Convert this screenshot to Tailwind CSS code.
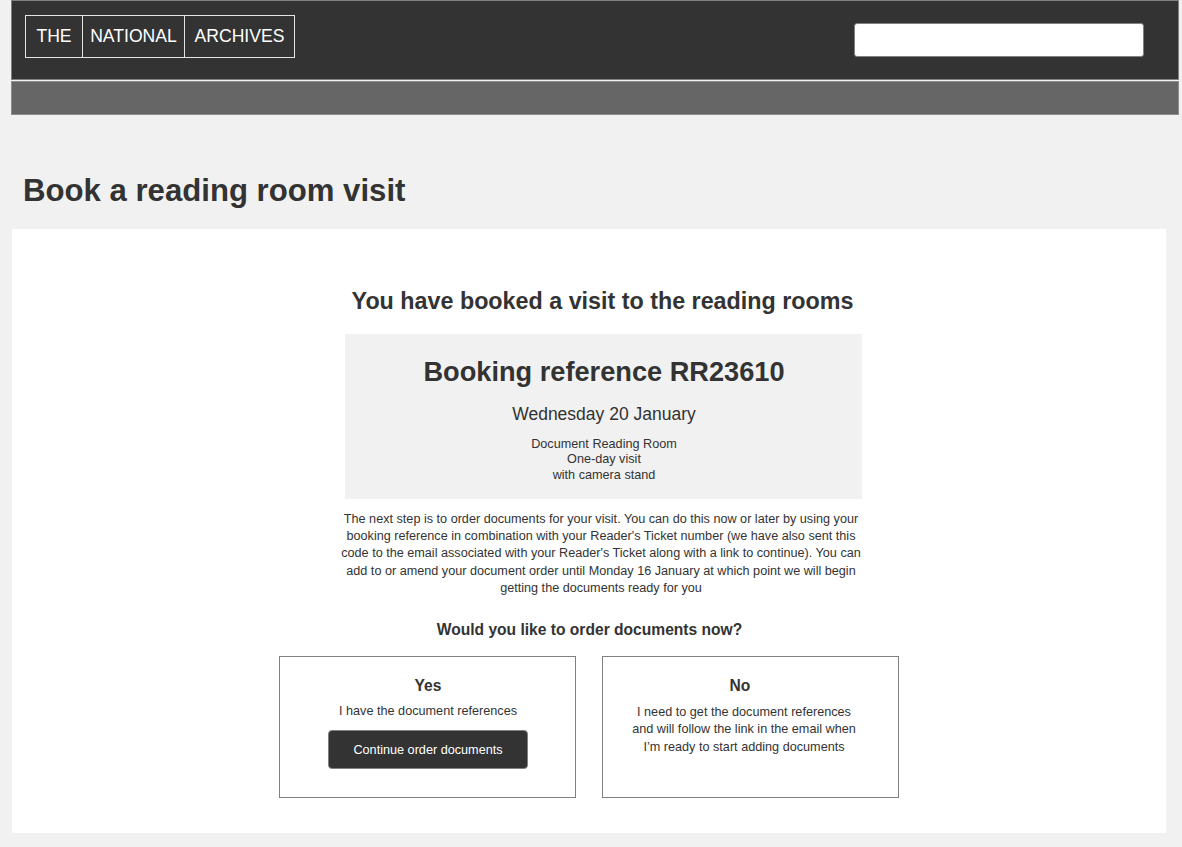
<!DOCTYPE html>
<html lang="en">
<head>
<meta charset="utf-8">
<title>Book a reading room visit</title>
<script src="https://cdn.jsdelivr.net/npm/@tailwindcss/browser@4"></script>
</head>
<body class="min-h-screen bg-[#f1f1f1] font-['Liberation_Sans',Arial,sans-serif] text-[#333]">
<div class="w-[1168px] ml-[11px]">
  <header class="flex h-20 items-start justify-between border border-[#808080] bg-[#333] pl-[13px] pr-[34px]">
    <div class="mt-[14px] flex h-[43px] w-[270px] divide-x-[1.5px] divide-[#e4e4e4] border-[1.5px] border-[#e4e4e4] text-[17.6px] leading-[41px] text-white">
      <span class="w-[57px] text-center">THE</span>
      <span class="w-[102px] text-center">NATIONAL</span>
      <span class="flex-1 text-center">ARCHIVES</span>
    </div>
    <input type="text" aria-label="Search" class="mt-[22px] h-[34px] w-[290px] rounded-[3px] border border-[#808080] bg-white px-2">
  </header>
  <nav class="mt-px h-[34px] border border-[#8c8c8c] bg-[#666]"></nav>
</div>
<main class="ml-3 w-[1154px] pt-[58px]">
  <h1 class="mb-5 pl-[11px] text-[31.15px] font-bold leading-9">Book a reading room visit</h1>
  <section class="flex h-[604px] flex-col items-center bg-white pt-[58px]">
    <h2 class="ml-[27px] text-[23.3px] font-bold leading-7">You have booked a visit to the reading rooms</h2>
    <div class="ml-[29px] mt-[19px] h-[165.4px] w-[517.5px] bg-[#f1f1f1] pt-[22px] text-center">
      <p class="pl-px text-[27.2px] font-bold leading-8">Booking reference RR23610</p>
      <p class="mt-[15px] pl-px text-[17.5px] leading-[22px]">Wednesday 20 January</p>
      <p class="mt-3 pl-px text-[12.67px] leading-[15.25px]">Document Reading Room<br>One-day visit<br>with camera stand</p>
    </div>
    <p class="ml-[24px] mt-[11.4px] whitespace-nowrap text-center text-[12.65px] leading-[17.3px]">The next step is to order documents for your visit. You can do this now or later by using your<br>booking reference in combination with your Reader's Ticket number (we have also sent this<br>code to the email associated with your Reader's Ticket along with a link to continue). You can<br>add to or amend your document order until Monday 16 January at which point we will begin<br>getting the documents ready for you</p>
    <h3 class="ml-px mt-[22.7px] text-[15.6px] font-bold leading-5">Would you like to order documents now?</h3>
    <div class="mt-4 flex gap-[26px] text-center text-[12.67px]">
      <div class="flex h-[142px] w-[297px] flex-col items-center border border-[#808080] pt-[19px]">
        <h4 class="ml-px text-[15.6px] font-bold leading-5">Yes</h4>
        <p class="ml-px mt-[7.5px] leading-[17px]">I have the document references</p>
        <button class="mt-[10px] h-[39px] w-[200px] rounded-[4px] border border-[#808080] bg-[#333] pl-px pt-px text-white">Continue order documents</button>
      </div>
      <div class="flex h-[142px] w-[297px] flex-col items-center border border-[#808080] pt-[19px]">
        <h4 class="mr-[21px] text-[15.6px] font-bold leading-5">No</h4>
        <p class="mr-[13px] mt-[8px] leading-[17.3px]">I need to get the document references<br>and will follow the link in the email when<br>I’m ready to start adding documents</p>
      </div>
    </div>
  </section>
</main>
</body>
</html>
